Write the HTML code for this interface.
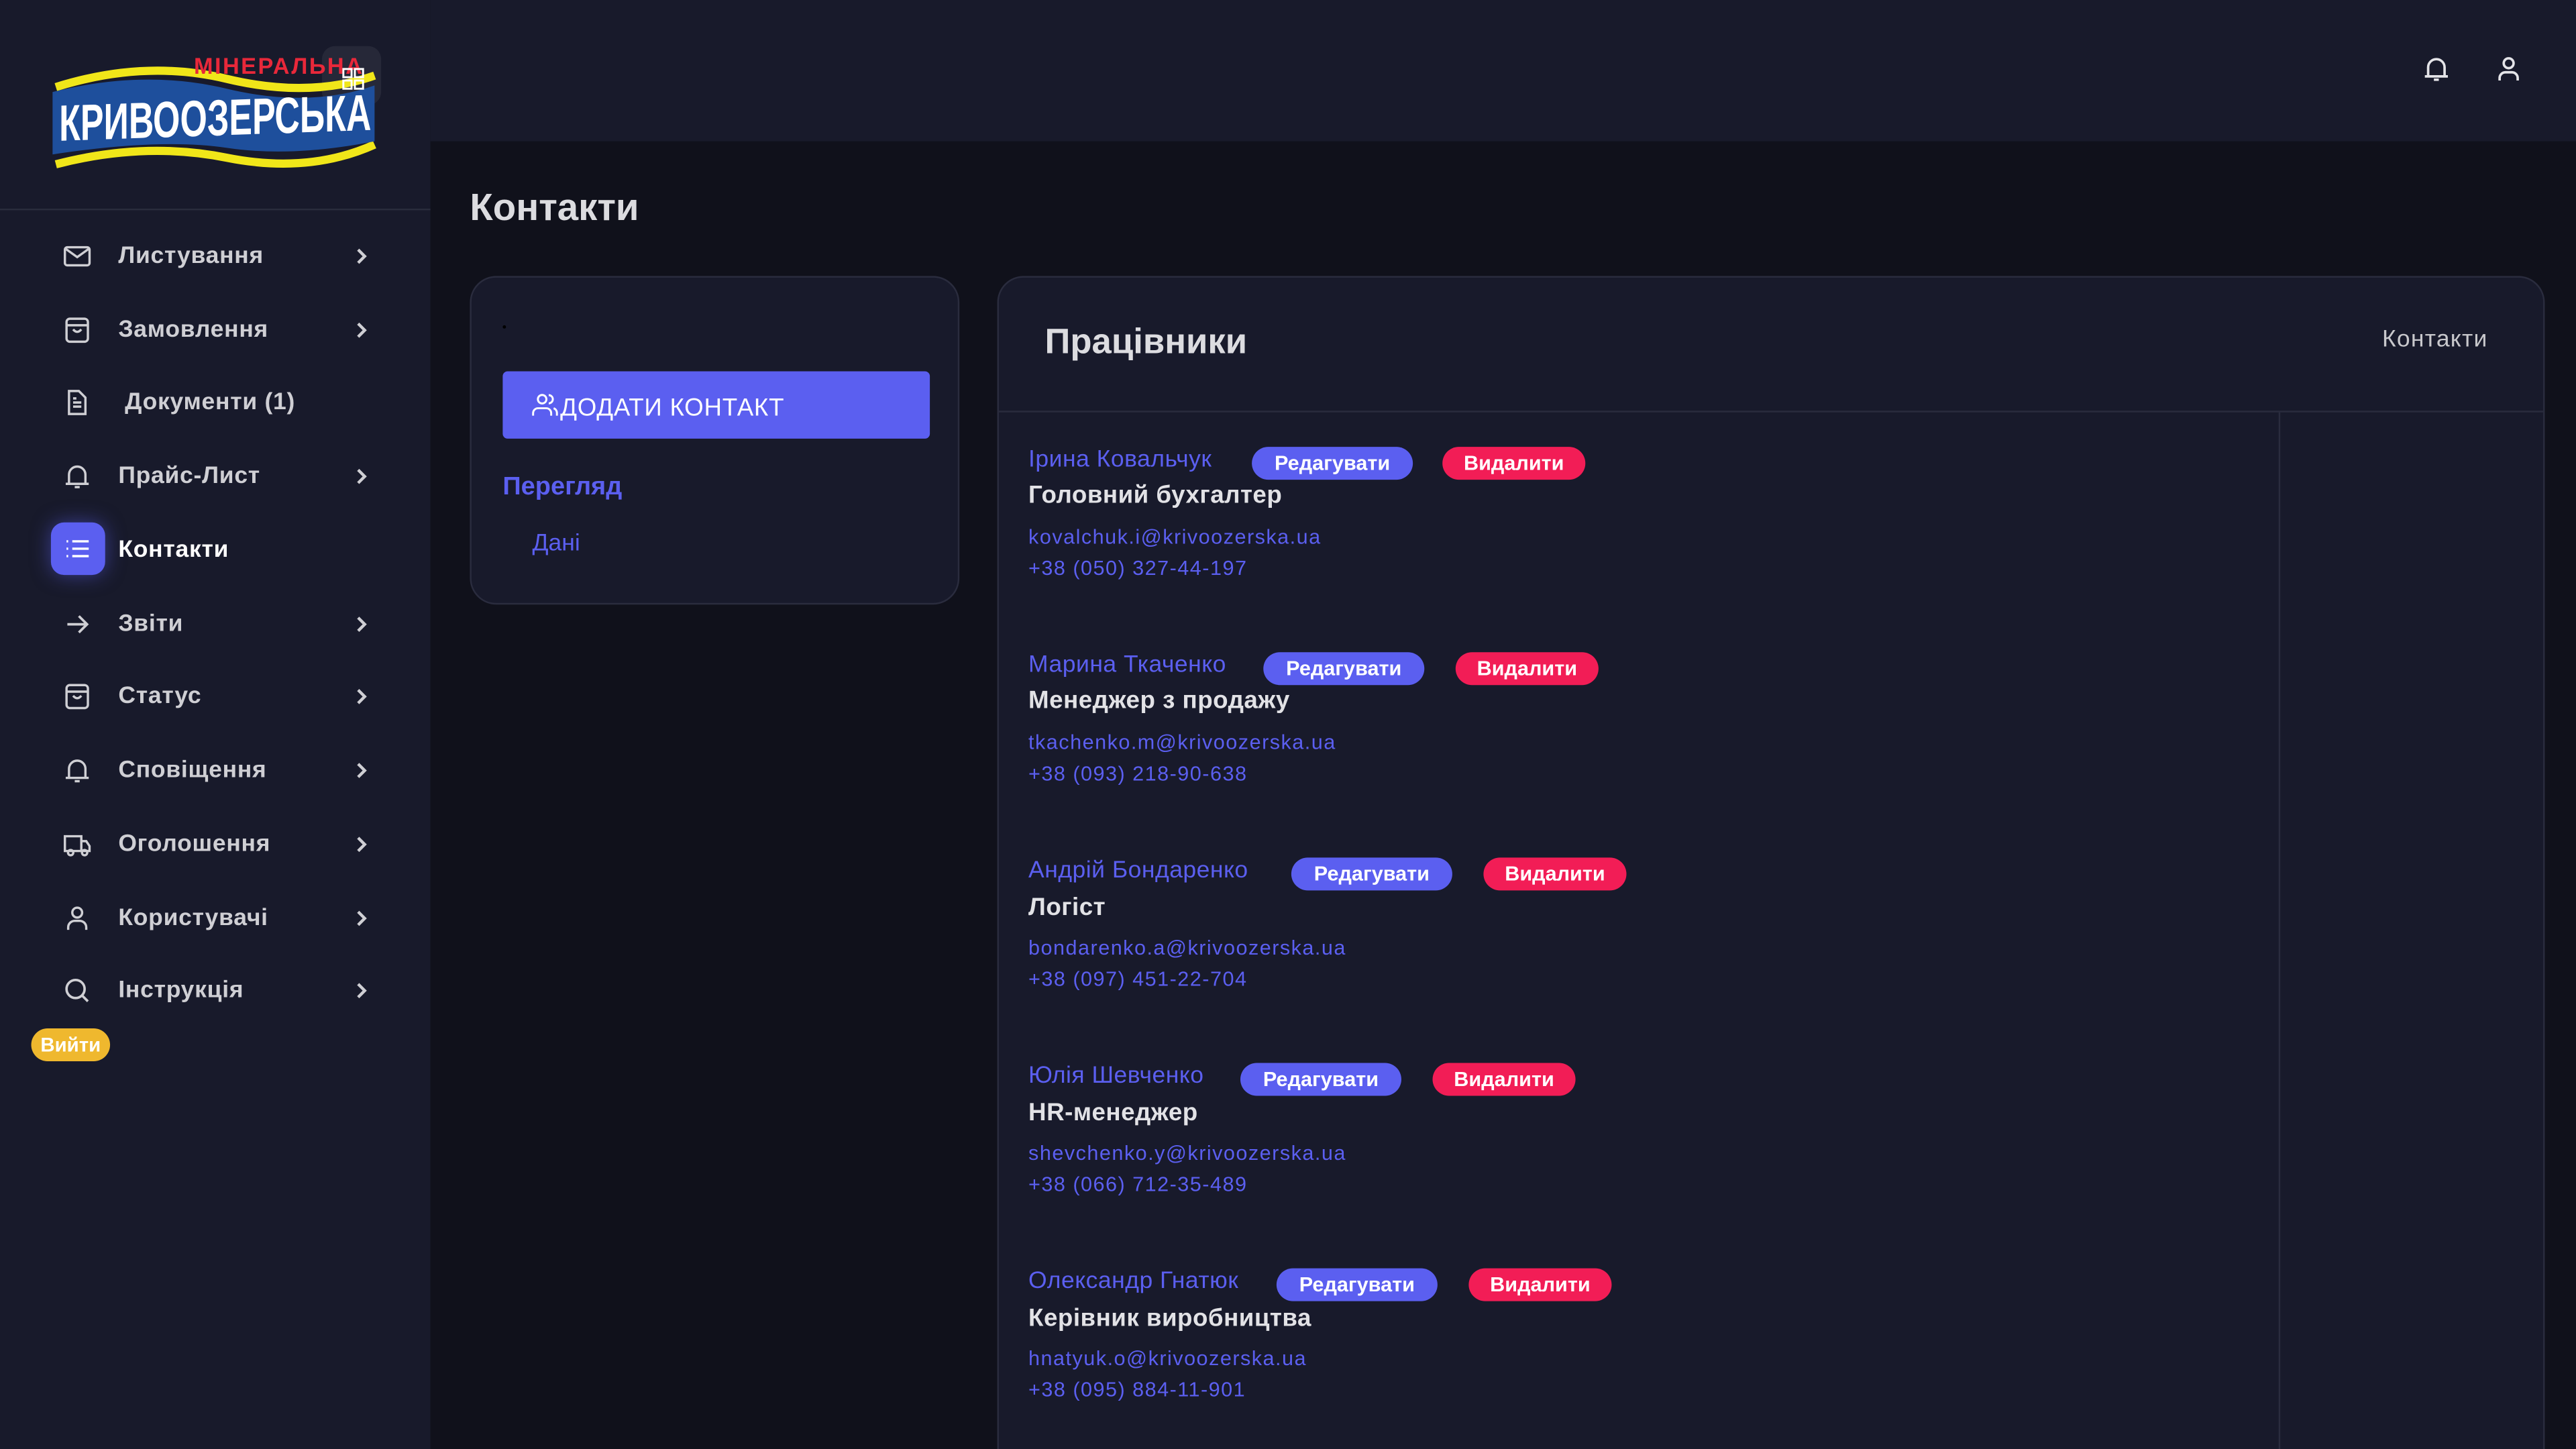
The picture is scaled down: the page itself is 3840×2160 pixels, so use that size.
<!DOCTYPE html>
<html><head><meta charset="utf-8"><style>
*{box-sizing:border-box;margin:0;padding:0}
html,body{width:3840px;height:2160px;overflow:hidden;background:#10111b}
#w{position:absolute;left:0;top:0;width:1568px;height:882px;overflow:hidden;transform:scale(2.44898);transform-origin:0 0;font-family:"Liberation Sans","Noto Sans CJK SC",sans-serif;background:#10111b}
.a{position:absolute;white-space:nowrap}
#sb{position:absolute;left:0;top:0;width:262px;height:882px;background:#181a2b}
#hd{position:absolute;left:262px;top:0;width:1306px;height:86px;background:#181a2b}
.mi{position:absolute;left:0;width:262px;height:30px}
.mi svg.ic{position:absolute;left:38px;top:6px}
.mi .t{position:absolute;left:72px;top:7px;font-size:14.5px;font-weight:bold;color:#cfcfd4;letter-spacing:.3px}
.mi .ch{position:absolute;left:215px;top:9px}
.card{position:absolute;background:#181a2b;border:1px solid #2a2c3e;border-radius:16px}
.nm{font-size:14.5px;color:#5b5ff0;letter-spacing:.2px}
.bd{position:absolute;height:20px;border-radius:10px;color:#fff;font-size:12.5px;font-weight:bold;line-height:20px;text-align:center}
.ed{background:#5b5ff0;width:98px}.de{background:#f21d56;width:87px}
.ro{font-size:15px;font-weight:bold;color:#e2e2e6;letter-spacing:.2px}
.em{font-size:12.5px;color:#5b5ff0;letter-spacing:.6px}
</style></head><body><div id="w">
<div id="sb">
 <svg class="a" style="left:28px;top:28px" width="210" height="80" viewBox="0 0 210 80">
  <rect x="168" y="0" width="36" height="36" rx="8" fill="#262838"/>
  <path d="M6 25 Q60 8 110 20 T200 18" stroke="#f0e619" stroke-width="5" fill="none"/>
  <path d="M6 72 Q60 58 110 68 T200 60" stroke="#f0e619" stroke-width="5" fill="none"/>
  <path d="M4 28 Q60 14 110 26 T200 24 L200 58 Q150 68 110 62 T4 66 Z" fill="#1e4f9c"/>
  <text x="90" y="17" font-family="Liberation Sans" font-weight="bold" font-size="14" fill="#e8283a" letter-spacing="1">МІНЕРАЛЬНА</text>
  <text x="8" y="58" font-family="Liberation Sans" font-weight="bold" font-size="31" fill="#fff" textLength="190" lengthAdjust="spacingAndGlyphs" transform="skewY(-2)">КРИВООЗЕРСЬКА</text>
  <rect x="181" y="14" width="5" height="5" fill="none" stroke="#fff" stroke-width="1.2"/><rect x="188" y="14" width="5" height="5" fill="none" stroke="#fff" stroke-width="1.2"/><rect x="181" y="21" width="5" height="5" fill="none" stroke="#fff" stroke-width="1.2"/><rect x="188" y="21" width="5" height="5" fill="none" stroke="#fff" stroke-width="1.2"/>
 </svg>
 <div class="a" style="left:0;top:127px;width:262px;height:1px;background:#2a2c3d"></div>

 <div class="mi" style="top:141px"><svg class="ic" width="18" height="18" viewBox="0 0 18 18" fill="none" stroke="#cfcfd4" stroke-width="1.4"><rect x="1.5" y="3.5" width="15" height="11" rx="1.5"/><path d="M2 4.5l7 5 7-5"/></svg><div class="t">Листування</div><svg class="ch" width="10" height="12" viewBox="0 0 10 12"><path d="M3 2l4 4-4 4" stroke="#cfcfd4" stroke-width="1.8" fill="none"/></svg></div>
 <div class="mi" style="top:186px"><svg class="ic" width="18" height="18" viewBox="0 0 18 18" fill="none" stroke="#cfcfd4" stroke-width="1.4"><rect x="2.5" y="2" width="13" height="14" rx="2"/><path d="M2.5 6h13M6.5 8.5q2.5 3 5 0"/></svg><div class="t">Замовлення</div><svg class="ch" width="10" height="12" viewBox="0 0 10 12"><path d="M3 2l4 4-4 4" stroke="#cfcfd4" stroke-width="1.8" fill="none"/></svg></div>
 <div class="mi" style="top:230px"><svg class="ic" width="18" height="18" viewBox="0 0 18 18" fill="none" stroke="#cfcfd4" stroke-width="1.4"><path d="M4 2h6l4 4v10H4z"/><path d="M6.5 9h5M6.5 11.5h5M6.5 6.5h2"/></svg><div class="t" style="left:76px">Документи (1)</div></div>
 <div class="mi" style="top:275px"><svg class="ic" width="18" height="18" viewBox="0 0 18 18" fill="none" stroke="#cfcfd4" stroke-width="1.4"><path d="M4 13V8a5 5 0 0110 0v5M2 13.5h14M7.5 15.5h3"/></svg><div class="t">Прайс-Лист</div><svg class="ch" width="10" height="12" viewBox="0 0 10 12"><path d="M3 2l4 4-4 4" stroke="#cfcfd4" stroke-width="1.8" fill="none"/></svg></div>
 <div class="a" style="left:31px;top:318px;width:33px;height:32px;border-radius:8px;background:#5b5ff0;box-shadow:0 0 12px rgba(91,95,240,.5)"></div>
 <svg class="a" style="left:38px;top:325px" width="18" height="18" viewBox="0 0 18 18" stroke="#fff" stroke-width="1.4"><path d="M6 4.5h10M6 9h10M6 13.5h10M2.5 4.5h1M2.5 9h1M2.5 13.5h1"/></svg>
 <div class="mi" style="top:320px"><div class="t" style="color:#fff">Контакти</div></div>
 <div class="mi" style="top:365px"><svg class="ic" width="18" height="18" viewBox="0 0 18 18" fill="none" stroke="#cfcfd4" stroke-width="1.5"><path d="M3 9h12M10 4l5 5-5 5"/></svg><div class="t">Звіти</div><svg class="ch" width="10" height="12" viewBox="0 0 10 12"><path d="M3 2l4 4-4 4" stroke="#cfcfd4" stroke-width="1.8" fill="none"/></svg></div>
 <div class="mi" style="top:409px"><svg class="ic" width="18" height="18" viewBox="0 0 18 18" fill="none" stroke="#cfcfd4" stroke-width="1.4"><rect x="2.5" y="2" width="13" height="14" rx="2"/><path d="M2.5 6h13M6.5 8.5q2.5 3 5 0"/></svg><div class="t">Статус</div><svg class="ch" width="10" height="12" viewBox="0 0 10 12"><path d="M3 2l4 4-4 4" stroke="#cfcfd4" stroke-width="1.8" fill="none"/></svg></div>
 <div class="mi" style="top:454px"><svg class="ic" width="18" height="18" viewBox="0 0 18 18" fill="none" stroke="#cfcfd4" stroke-width="1.4"><path d="M4 13V8a5 5 0 0110 0v5M2 13.5h14M7.5 15.5h3"/></svg><div class="t">Сповіщення</div><svg class="ch" width="10" height="12" viewBox="0 0 10 12"><path d="M3 2l4 4-4 4" stroke="#cfcfd4" stroke-width="1.8" fill="none"/></svg></div>
 <div class="mi" style="top:499px"><svg class="ic" width="18" height="18" viewBox="0 0 18 18" fill="none" stroke="#cfcfd4" stroke-width="1.4"><path d="M1.5 4h10v9h-10zM11.5 7h3l2 3v3h-5"/><circle cx="5" cy="14" r="1.6"/><circle cx="13.5" cy="14" r="1.6"/></svg><div class="t">Оголошення</div><svg class="ch" width="10" height="12" viewBox="0 0 10 12"><path d="M3 2l4 4-4 4" stroke="#cfcfd4" stroke-width="1.8" fill="none"/></svg></div>
 <div class="mi" style="top:544px"><svg class="ic" width="18" height="18" viewBox="0 0 18 18" fill="none" stroke="#cfcfd4" stroke-width="1.4"><circle cx="9" cy="5.5" r="3"/><path d="M3.5 16v-1.5a4 4 0 014-4h3a4 4 0 014 4V16"/></svg><div class="t">Користувачі</div><svg class="ch" width="10" height="12" viewBox="0 0 10 12"><path d="M3 2l4 4-4 4" stroke="#cfcfd4" stroke-width="1.8" fill="none"/></svg></div>
 <div class="mi" style="top:588px"><svg class="ic" width="18" height="18" viewBox="0 0 18 18" fill="none" stroke="#cfcfd4" stroke-width="1.5"><circle cx="8" cy="8" r="5.5"/><path d="M12 12l3.5 3.5"/></svg><div class="t">Інструкція</div><svg class="ch" width="10" height="12" viewBox="0 0 10 12"><path d="M3 2l4 4-4 4" stroke="#cfcfd4" stroke-width="1.8" fill="none"/></svg></div>
 <div class="a" style="left:19px;top:626px;width:48px;height:20px;border-radius:10px;background:#efb82e;color:#fff;font-size:12px;font-weight:bold;line-height:20px;text-align:center">Вийти</div>
</div>

<div id="hd">
 <svg class="a" style="left:1212px;top:33px" width="18" height="18" viewBox="0 0 18 18" fill="none" stroke="#e4e4e8" stroke-width="1.5"><path d="M4 13V8a5 5 0 0110 0v5M2 13.5h14M7.5 15.5h3"/></svg>
 <svg class="a" style="left:1256px;top:33px" width="18" height="18" viewBox="0 0 18 18" fill="none" stroke="#e4e4e8" stroke-width="1.5"><circle cx="9" cy="5.5" r="3"/><path d="M3.5 16v-1.5a3.5 3.5 0 013.5-3.5h4a3.5 3.5 0 013.5 3.5V16"/></svg>
</div>

<div class="a" style="left:286px;top:113px;font-size:23px;font-weight:bold;color:#dcdce0">Контакти</div>

<div class="card" style="left:286px;top:168px;width:298px;height:200px">
 <div class="a" style="left:19px;top:29px;width:2px;height:2px;background:#000;border-radius:1px"></div>
 <div class="a" style="left:19px;top:57px;width:260px;height:41px;background:#5b5ff0;border-radius:3px"></div>
 <svg class="a" style="left:36px;top:70px" width="18" height="16" viewBox="0 0 18 16" fill="none" stroke="#fff" stroke-width="1.2"><circle cx="7" cy="4" r="2.6"/><path d="M1.5 14v-1.5a3 3 0 013-3h5a3 3 0 013 3V14M11 1.5a2.5 2.5 0 010 5M14 9.5a3 3 0 012 3V14"/></svg>
 <div class="a" style="left:54px;top:71px;font-size:15px;color:#fff;letter-spacing:.3px">ДОДАТИ КОНТАКТ</div>
 <div class="a" style="left:19px;top:119px;font-size:15.5px;font-weight:bold;color:#5b5ff0">Перегляд</div>
 <div class="a" style="left:37px;top:154px;font-size:14.5px;color:#5b5ff0">Дані</div>
</div>

<div class="card" style="left:607px;top:168px;width:942px;height:740px">
 <div class="a" style="left:28px;top:27px;font-size:21.5px;font-weight:bold;color:#dcdce0">Працівники</div>
 <div class="a" style="left:842px;top:30px;font-size:14.5px;color:#c8c8cc;letter-spacing:.5px">Контакти</div>
 <div class="a" style="left:0;top:81px;width:940px;height:1px;background:#2a2c3e"></div>
 <div class="a" style="left:779px;top:82px;width:1px;height:660px;background:#2a2c3e"></div>
</div>

<div class="a" style="left:626px;top:272px">
 <div class="a nm" style="left:0;top:0">Ірина Ковальчук</div>
 <div class="bd ed" style="left:136px;top:0">Редагувати</div><div class="bd de" style="left:252px;top:0">Видалити</div>
 <div class="a ro" style="left:0;top:21px">Головний бухгалтер</div>
 <div class="a em" style="left:0;top:48px">kovalchuk.i@krivoozerska.ua</div>
 <div class="a em" style="left:0;top:67px">+38 (050) 327-44-197</div>
</div>
<div class="a" style="left:626px;top:397px">
 <div class="a nm" style="left:0;top:0">Марина Ткаченко</div>
 <div class="bd ed" style="left:143px;top:0">Редагувати</div><div class="bd de" style="left:260px;top:0">Видалити</div>
 <div class="a ro" style="left:0;top:21px">Менеджер з продажу</div>
 <div class="a em" style="left:0;top:48px">tkachenko.m@krivoozerska.ua</div>
 <div class="a em" style="left:0;top:67px">+38 (093) 218-90-638</div>
</div>
<div class="a" style="left:626px;top:522px">
 <div class="a nm" style="left:0;top:0">Андрій Бондаренко</div>
 <div class="bd ed" style="left:160px;top:0">Редагувати</div><div class="bd de" style="left:277px;top:0">Видалити</div>
 <div class="a ro" style="left:0;top:22px">Логіст</div>
 <div class="a em" style="left:0;top:48px">bondarenko.a@krivoozerska.ua</div>
 <div class="a em" style="left:0;top:67px">+38 (097) 451-22-704</div>
</div>
<div class="a" style="left:626px;top:647px">
 <div class="a nm" style="left:0;top:0">Юлія Шевченко</div>
 <div class="bd ed" style="left:129px;top:0">Редагувати</div><div class="bd de" style="left:246px;top:0">Видалити</div>
 <div class="a ro" style="left:0;top:22px">HR-менеджер</div>
 <div class="a em" style="left:0;top:48px">shevchenko.y@krivoozerska.ua</div>
 <div class="a em" style="left:0;top:67px">+38 (066) 712-35-489</div>
</div>
<div class="a" style="left:626px;top:772px">
 <div class="a nm" style="left:0;top:0">Олександр Гнатюк</div>
 <div class="bd ed" style="left:151px;top:0">Редагувати</div><div class="bd de" style="left:268px;top:0">Видалити</div>
 <div class="a ro" style="left:0;top:22px">Керівник виробництва</div>
 <div class="a em" style="left:0;top:48px">hnatyuk.o@krivoozerska.ua</div>
 <div class="a em" style="left:0;top:67px">+38 (095) 884-11-901</div>
</div>
</div></body></html>
